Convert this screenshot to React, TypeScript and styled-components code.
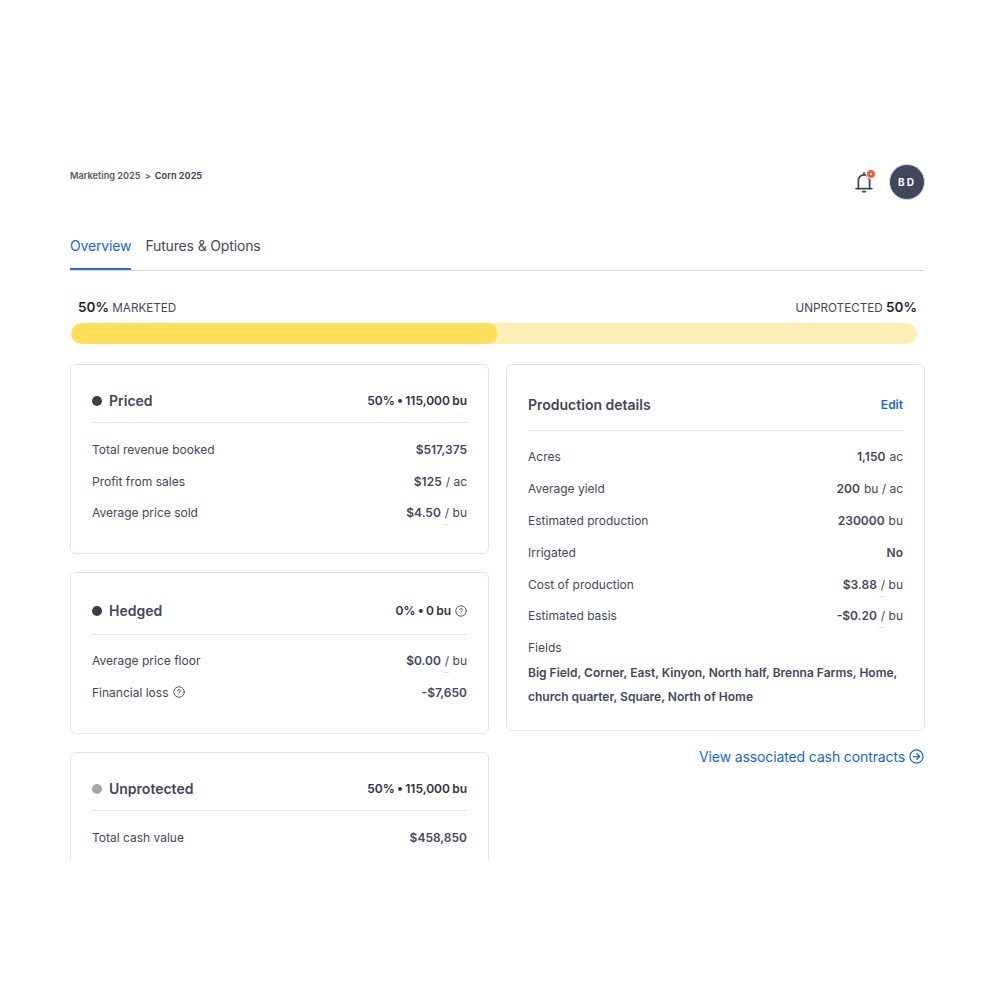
import React from 'react';
import styled, { createGlobalStyle } from 'styled-components';

const GlobalStyle = createGlobalStyle`
  html, body {
    margin: 0;
    padding: 0;
    background: #fff;
    font-family: Inter, "Noto Sans", sans-serif;
    color: #3f4454;
  }
  * { box-sizing: border-box; }
`;

const Page = styled.div`
  width: 1000px;
  height: 1000px;
  padding: 164px 75px 0 70px;
`;

const Frame = styled.div`
  height: 696px;
  overflow: hidden;
`;

const TopBar = styled.header`
  display: flex;
  justify-content: space-between;
  align-items: flex-start;
  height: 36px;
`;

const Crumbs = styled.nav`
  display: flex;
  align-items: center;
  gap: 4px;
  height: 22px;
  font-size: 9.2px;
  font-weight: 600;
  color: #555a66;
  b { color: #33384a; font-weight: 600; }
`;

const TopActions = styled.div`
  display: flex;
  align-items: center;
  gap: 15px;
`;

const BellWrap = styled.div`
  position: relative;
  width: 20px;
  height: 22px;
  svg { display: block; }
`;

const BellBadge = styled.span`
  position: absolute;
  top: -2px;
  right: -2px;
  width: 10px;
  height: 10px;
  border-radius: 50%;
  background: #ef5a3c;
  border: 1px solid #fff;
  &::after {
    content: '';
    position: absolute;
    left: 3px;
    top: 3px;
    width: 2px;
    height: 2px;
    background: #fde3dc;
  }
`;

const Avatar = styled.div`
  width: 36px;
  height: 36px;
  border-radius: 50%;
  background: #41465a;
  border: 1px solid #d4d6db;
  color: #fff;
  font-size: 10px;
  font-weight: 700;
  letter-spacing: 2px;
  display: flex;
  align-items: center;
  justify-content: center;
`;

const Tabs = styled.div`
  display: flex;
  gap: 14px;
  margin-top: 30px;
  height: 41px;
  border-bottom: 1px solid #d9dbe0;
`;

const Tab = styled.div<{ $active?: boolean }>`
  height: 40px;
  padding-top: 7px;
  font-size: 14px;
  line-height: 17px;
  letter-spacing: -0.15px;
  color: ${(p) => (p.$active ? '#1467d3' : '#434859')};
  border-bottom: ${(p) => (p.$active ? '2px solid #1f6fd6' : 'none')};
`;

const ProgressLabels = styled.div`
  display: flex;
  justify-content: space-between;
  margin: 27px 8px 0;
  height: 18px;
  font-size: 11.7px;
  line-height: 18px;
  color: #434859;
  b { font-size: 13.5px; font-weight: 600; color: #1c1f2a; }
`;

const ProgressTrack = styled.div`
  margin: 7px 8px 0 1px;
  height: 21px;
  border-radius: 11px;
  background: #fdf0b5;
  overflow: hidden;
`;

const ProgressFill = styled.div`
  height: 100%;
  background: #ffde59;
  border-radius: 11px;
  border-right: 1px solid #fff;
`;

const Columns = styled.div`
  display: grid;
  grid-template-columns: 419px 419px;
  column-gap: 17px;
  margin-top: 20px;
  align-items: start;
`;

const Stack = styled.div`
  display: flex;
  flex-direction: column;
  gap: 18px;
`;

const Card = styled.section<{ $height: number }>`
  height: ${(p) => p.$height}px;
  padding: 0 21px;
  border: 1px solid #e3e4e8;
  border-radius: 6px;
  background: #fff;
  flex-shrink: 0;
`;

const CardHead = styled.div<{ $height: number; $top: number }>`
  display: flex;
  justify-content: space-between;
  align-items: center;
  margin-top: ${(p) => p.$top}px;
  padding-bottom: 2px;
  height: ${(p) => p.$height}px;
  border-bottom: 1px solid #e3e4e8;
`;

const CardTitle = styled.div`
  display: flex;
  align-items: center;
  gap: 7px;
  font-size: 14px;
  font-weight: 600;
  color: #434859;
`;

const Dot = styled.span<{ $color: string }>`
  width: 10px;
  height: 10px;
  border-radius: 50%;
  background: ${(p) => p.$color};
`;

const HeadValue = styled.div`
  display: flex;
  align-items: center;
  gap: 4px;
  font-size: 12px;
  font-weight: 600;
  word-spacing: -0.8px;
  color: #2f3342;
  svg { display: block; }
`;

const Rows = styled.div<{ $top: number; $step: number }>`
  display: grid;
  grid-auto-rows: ${(p) => p.$step}px;
  margin-top: ${(p) => p.$top}px;
`;

const Row = styled.div`
  display: flex;
  justify-content: space-between;
  align-items: center;
  font-size: 12px;
  color: #434859;
`;

const RowLabel = styled.span`
  display: flex;
  align-items: center;
  gap: 5px;
  svg { display: block; }
`;

const RowValue = styled.span`
  position: relative;
  display: flex;
  align-items: center;
  gap: 4px;
  b { font-weight: 600; color: #434859; }
`;

const Tick = styled.span`
  position: absolute;
  right: 18px;
  bottom: -5px;
  width: 6px;
  height: 1px;
  background: #e3e4e8;
`;

const EditLink = styled.span`
  font-size: 12px;
  font-weight: 600;
  color: #1467d3;
`;

const FieldsBlock = styled.div`
  margin-top: 4px;
  font-size: 12px;
  line-height: 24px;
  color: #434859;
  b { display: block; margin-top: 1px; font-weight: 600; }
`;

const CashLink = styled.div`
  display: flex;
  justify-content: flex-end;
  align-items: center;
  gap: 4px;
  margin-top: 16px;
  padding-right: 1px;
  height: 18px;
  font-size: 14px;
  letter-spacing: -0.12px;
  color: #1467d3;
  svg { display: block; }
`;

const HelpIcon = () => (
  <svg width="12" height="12" viewBox="0 0 24 24" fill="none" stroke="#434859" strokeWidth="1.8" strokeLinecap="round" strokeLinejoin="round">
    <circle cx="12" cy="12" r="10.5" />
    <path d="M9 9.2a3 3 0 0 1 5.8 1c0 2-2.8 2.4-2.8 4" />
    <path d="M12 17.6h.01" />
  </svg>
);

const BellIcon = () => (
  <svg width="20" height="22" viewBox="0 0 20 22" fill="none" stroke="#434859" strokeWidth="1.8" strokeLinecap="round" strokeLinejoin="round">
    <path d="M2.2 17.6h15.6" />
    <path d="M4.4 17.6V9.4a5.6 5.6 0 0 1 11.2 0v8.2" />
    <path d="M10 3.6V1.8" />
    <path d="M8.6 20.6h2.8" />
  </svg>
);

const ArrowCircle = () => (
  <svg width="15" height="15" viewBox="0 0 24 24" fill="none" stroke="#1467d3" strokeWidth="2" strokeLinecap="round" strokeLinejoin="round">
    <circle cx="12" cy="12" r="10.5" />
    <path d="M7 12h10" />
    <path d="M12.5 7.5 17 12l-4.5 4.5" />
  </svg>
);

const Value = ({ amount, unit, tick }: { amount: string; unit?: string; tick?: boolean }) => (
  <RowValue>
    <b>{amount}</b>
    {unit && <span>{unit}</span>}
    {tick && <Tick />}
  </RowValue>
);

export default function App() {
  return (
    <>
      <GlobalStyle />
      <Page>
        <Frame>
          <TopBar>
            <Crumbs>
              Marketing 2025 <span>&gt;</span> <b>Corn 2025</b>
            </Crumbs>
            <TopActions>
              <BellWrap>
                <BellIcon />
                <BellBadge />
              </BellWrap>
              <Avatar>BD</Avatar>
            </TopActions>
          </TopBar>

          <Tabs>
            <Tab $active>Overview</Tab>
            <Tab>Futures &amp; Options</Tab>
          </Tabs>

          <ProgressLabels>
            <span><b>50%</b> MARKETED</span>
            <span>UNPROTECTED <b>50%</b></span>
          </ProgressLabels>
          <ProgressTrack>
            <ProgressFill style={{ width: '50.6%' }} />
          </ProgressTrack>

          <Columns>
            <Stack>
              <Card $height={190}>
                <CardHead $top={16} $height={42}>
                  <CardTitle><Dot $color="#3a3f4c" />Priced</CardTitle>
                  <HeadValue>50% • 115,000 bu</HeadValue>
                </CardHead>
                <Rows $top={11} $step={31.5}>
                  <Row>Total revenue booked<Value amount="$517,375" /></Row>
                  <Row>Profit from sales<Value amount="$125" unit="/ ac" /></Row>
                  <Row>Average price sold<Value amount="$4.50" unit="/ bu" tick /></Row>
                </Rows>
              </Card>

              <Card $height={162}>
                <CardHead $top={16} $height={46}>
                  <CardTitle><Dot $color="#3a3f4c" />Hedged</CardTitle>
                  <HeadValue>0% • 0 bu <HelpIcon /></HeadValue>
                </CardHead>
                <Rows $top={10} $step={31.5}>
                  <Row>Average price floor<Value amount="$0.00" unit="/ bu" tick /></Row>
                  <Row><RowLabel>Financial loss <HelpIcon /></RowLabel><Value amount="-$7,650" /></Row>
                </Rows>
              </Card>

              <Card $height={160}>
                <CardHead $top={16} $height={42}>
                  <CardTitle><Dot $color="#a5a6aa" />Unprotected</CardTitle>
                  <HeadValue>50% • 115,000 bu</HeadValue>
                </CardHead>
                <Rows $top={10} $step={32}>
                  <Row>Total cash value<Value amount="$458,850" /></Row>
                </Rows>
              </Card>
            </Stack>

            <div>
              <Card $height={367}>
                <CardHead $top={16} $height={50}>
                  <CardTitle>Production details</CardTitle>
                  <EditLink>Edit</EditLink>
                </CardHead>
                <Rows $top={10} $step={31.8}>
                  <Row>Acres<Value amount="1,150" unit="ac" /></Row>
                  <Row>Average yield<Value amount="200" unit="bu / ac" /></Row>
                  <Row>Estimated production<Value amount="230000" unit="bu" /></Row>
                  <Row>Irrigated<Value amount="No" /></Row>
                  <Row>Cost of production<Value amount="$3.88" unit="/ bu" tick /></Row>
                  <Row>Estimated basis<Value amount="-$0.20" unit="/ bu" tick /></Row>
                </Rows>
                <FieldsBlock>
                  Fields
                  <b>Big Field, Corner, East, Kinyon, North half, Brenna Farms, Home, church quarter, Square, North of Home</b>
                </FieldsBlock>
              </Card>
              <CashLink>View associated cash contracts <ArrowCircle /></CashLink>
            </div>
          </Columns>
        </Frame>
      </Page>
    </>
  );
}
